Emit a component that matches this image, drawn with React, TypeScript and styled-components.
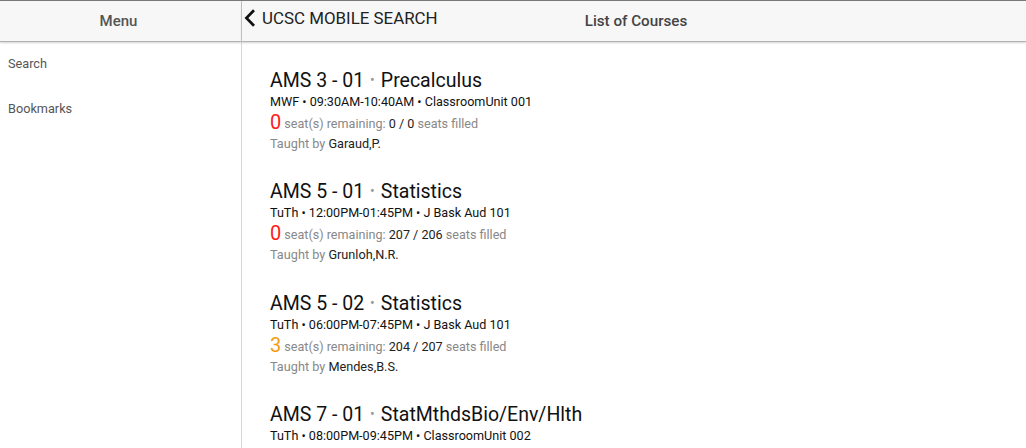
import React from 'react';
import styled, { createGlobalStyle } from 'styled-components';

const GlobalStyle = createGlobalStyle`
  html, body {
    margin: 0;
    padding: 0;
    background: #fff;
    font-family: Roboto, "Liberation Sans", Arial, sans-serif;
    overflow: hidden;
  }
`;

const Shell = styled.div`
  display: grid;
  grid-template-columns: 242px 1fr;
  height: 448px;
  border-top: 1px solid #7a7a7a;
  box-sizing: border-box;
`;

const Side = styled.aside`
  display: flex;
  flex-direction: column;
  border-right: 1px solid #d6d6d6;
`;

const Main = styled.main`
  display: flex;
  flex-direction: column;
  min-width: 0;
`;

const Bar = styled.header`
  position: relative;
  display: flex;
  align-items: center;
  height: 40px;
  background: #f7f7f7;
  border-bottom: 1px solid #b3b3b3;
  box-shadow: 0 1px 2px rgba(0, 0, 0, 0.18);
  flex-shrink: 0;
`;

const SideTitle = styled.div`
  flex: 1;
  text-align: center;
  font-size: 15px;
  font-weight: 500;
  color: #555;
  padding-right: 4px;
`;

const BackButton = styled.div`
  display: flex;
  align-items: center;
  gap: 6px;
  padding-left: 2px;
  font-size: 16.9px;
  color: #222;
  margin-top: -6px;
`;

const BarTitle = styled.div`
  position: absolute;
  left: 0;
  right: 0;
  text-align: center;
  font-size: 15.2px;
  font-weight: 500;
  color: #444;
  padding-left: 4px;
  pointer-events: none;
`;

const NavList = styled.nav`
  display: flex;
  flex-direction: column;
  margin-top: -1px;
`;

const NavItem = styled.div`
  height: 45px;
  display: flex;
  align-items: center;
  padding-left: 8px;
  font-size: 12.7px;
  color: #555;
`;

const List = styled.div`
  display: flex;
  flex-direction: column;
  padding: 25px 0 0 28px;
`;

const Course = styled.div`
  display: flex;
  flex-direction: column;
  height: 111.3px;
`;

const Title = styled.div`
  font-size: 19.5px;
  color: #111;
  line-height: 27px;
`;

const Dot = styled.span`
  color: #999;
  font-size: 14px;
  margin: 0 6px;
  vertical-align: 2px;
`;

const Meta = styled.div`
  font-size: 12.6px;
  color: #111;
  line-height: 16px;
`;

const Seats = styled.div`
  font-size: 12.6px;
  color: #888;
  line-height: 22px;
  margin-top: 1px;
`;

const Count = styled.span<{ tone: 'red' | 'orange' }>`
  font-size: 20px;
  color: ${({ tone }) => (tone === 'red' ? '#ff1a1a' : '#f39c12')};
  margin-right: 3px;
  vertical-align: -1px;
`;

const Dark = styled.span`
  color: #222;
`;

const Teacher = styled.div`
  font-size: 12.7px;
  color: #888;
  line-height: 18px;
`;

type CourseData = {
  code: string;
  name: string;
  meta: string;
  left: number;
  filled: string;
  teacher: string;
};

const COURSES: CourseData[] = [
  { code: 'AMS 3 - 01', name: 'Precalculus', meta: 'MWF • 09:30AM-10:40AM • ClassroomUnit 001', left: 0, filled: '0 / 0', teacher: 'Garaud,P.' },
  { code: 'AMS 5 - 01', name: 'Statistics', meta: 'TuTh • 12:00PM-01:45PM • J Bask Aud 101', left: 0, filled: '207 / 206', teacher: 'Grunloh,N.R.' },
  { code: 'AMS 5 - 02', name: 'Statistics', meta: 'TuTh • 06:00PM-07:45PM • J Bask Aud 101', left: 3, filled: '204 / 207', teacher: 'Mendes,B.S.' },
  { code: 'AMS 7 - 01', name: 'StatMthdsBio/Env/Hlth', meta: 'TuTh • 08:00PM-09:45PM • ClassroomUnit 002', left: 5, filled: '', teacher: '' },
];

const Chevron = () => (
  <svg width="12" height="18" viewBox="0 0 12 18">
    <path d="M10 1.2 L2.4 9 L10 16.8" fill="none" stroke="#111" strokeWidth="2.7" />
  </svg>
);

const App: React.FC = () => (
  <>
    <GlobalStyle />
    <Shell>
      <Side>
        <Bar>
          <SideTitle>Menu</SideTitle>
        </Bar>
        <NavList>
          <NavItem>Search</NavItem>
          <NavItem>Bookmarks</NavItem>
        </NavList>
      </Side>
      <Main>
        <Bar>
          <BackButton>
            <Chevron />
            UCSC MOBILE SEARCH
          </BackButton>
          <BarTitle>List of Courses</BarTitle>
        </Bar>
        <List>
          {COURSES.map((c) => (
            <Course key={c.code}>
              <Title>
                {c.code}
                <Dot>•</Dot>
                {c.name}
              </Title>
              <Meta>{c.meta}</Meta>
              {c.filled && (
                <Seats>
                  <Count tone={c.left === 0 ? 'red' : 'orange'}>{c.left}</Count>
                  seat(s) remaining: <Dark>{c.filled}</Dark> seats filled
                </Seats>
              )}
              {c.teacher && (
                <Teacher>
                  Taught by <Dark>{c.teacher}</Dark>
                </Teacher>
              )}
            </Course>
          ))}
        </List>
      </Main>
    </Shell>
  </>
);

export default App;
